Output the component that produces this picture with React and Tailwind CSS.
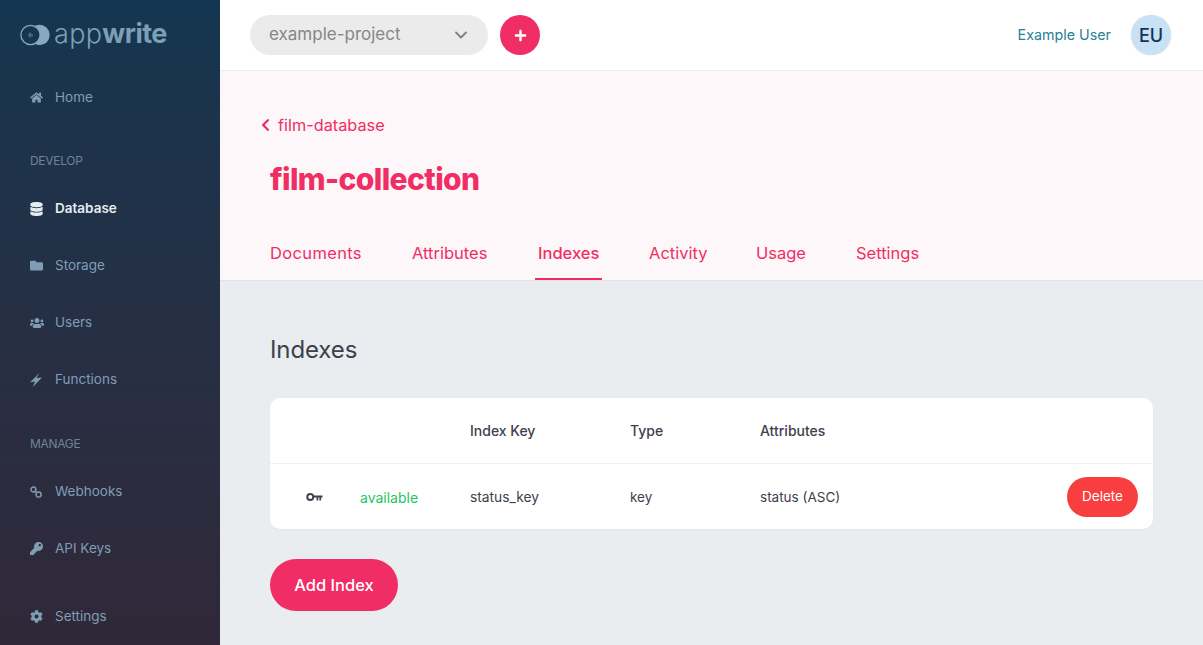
import React from "react";
import { FaHome, FaDatabase, FaFolder, FaUsers, FaKey, FaCog, FaChevronLeft, FaPlus } from "react-icons/fa";
import { ChevronDown } from "lucide-react";

const fontStack = { fontFamily: "Inter, 'Liberation Sans', sans-serif" };

const LinkIcon = ({ className }) => (
  <svg viewBox="0 0 14 14" className={className} fill="none" stroke="currentColor" strokeWidth="1.7">
    <circle cx="4" cy="4" r="2.9" />
    <circle cx="10" cy="10" r="3" />
    <path d="M6 6 8 8" />
  </svg>
);

const BoltIcon = ({ className }) => (
  <svg viewBox="0 0 12 14" className={className} fill="currentColor">
    <path d="M9.5 0 6.4 5 12 4.4 2.8 14 5 8.6 0 9.2Z" />
  </svg>
);

const TableKey = ({ className }) => (
  <svg viewBox="0 0 18 10" className={className} fill="none">
    <circle cx="4.5" cy="5" r="3.2" stroke="currentColor" strokeWidth="2" />
    <path d="M7.5 3.4H17.5V5.6H16V8.6H14.2V5.6H13V8.6H11.2V5.6H7.5Z" fill="currentColor" />
  </svg>
);

const Logo = () => (
  <div className="flex items-center gap-[4px] pl-[20px] h-[69px] text-[#7c9fb8]">
    <svg viewBox="0 0 30 22" className="w-[30px] h-[22px] mt-[1px]">
      <circle cx="19.5" cy="11" r="10.2" fill="#86a8c0" />
      <circle cx="10.5" cy="11" r="9.6" fill="#143650" stroke="#86a8c0" strokeWidth="1.3" />
      <path d="M8 11h1M10 8.5v5M12 10v2.5" stroke="#86a8c0" strokeWidth="0.8" />
    </svg>
    <span className="text-[27px] leading-none font-light mt-[-2px] tracking-[0.3px]">
      app<span className="font-bold tracking-[-0.5px]">write</span>
    </span>
  </div>
);

const NavItem = ({ icon: Icon, label, active, iconClass = "w-[12px] h-[12px]" }) => (
  <div className={`h-[57px] flex items-center pl-[30px] text-[13.5px] ${active ? "text-[#e6edf2] font-semibold" : "text-[#7f9db5]"}`}>
    <span className="w-[25px] flex items-center">
      <Icon className={iconClass} />
    </span>
    {label}
  </div>
);

const NavLabel = ({ children, className }) => (
  <div className={`pl-[30px] text-[12px] tracking-[-0.3px] text-[#6e8496] ${className}`}>{children}</div>
);

const Sidebar = () => (
  <aside className="w-[220px] shrink-0 h-full flex flex-col bg-gradient-to-b from-[#143650] to-[#302839]">
    <Logo />
    <NavItem icon={FaHome} label="Home" iconClass="w-[13px] h-[13px]" />
    <NavLabel className="h-[54px] pt-[26px] leading-[18px]">DEVELOP</NavLabel>
    <NavItem icon={FaDatabase} label="Database" active iconClass="w-[13px] h-[14px]" />
    <NavItem icon={FaFolder} label="Storage" iconClass="w-[13px] h-[13px]" />
    <NavItem icon={FaUsers} label="Users" iconClass="w-[14px] h-[16px]" />
    <NavItem icon={BoltIcon} label="Functions" iconClass="w-[12px] h-[14px]" />
    <NavLabel className="h-[55px] pt-[27px] leading-[18px]">MANAGE</NavLabel>
    <NavItem icon={LinkIcon} label="Webhooks" />
    <NavItem icon={FaKey} label="API Keys" iconClass="w-[13px] h-[13px]" />
    <div className="mt-auto">
      <NavItem icon={FaCog} label="Settings" iconClass="w-[13px] h-[13px]" />
    </div>
  </aside>
);

const TopBar = () => (
  <header className="h-[71px] shrink-0 bg-white border-b border-[#eeeeee] flex items-center pl-[30px] pr-[32px]">
    <div className="w-[238px] h-[40px] rounded-full bg-[#ebebeb] flex items-center justify-between pl-[19px] pr-[17px] text-[#868686] text-[17px]">
      example-project
      <ChevronDown className="w-[20px] h-[20px] text-[#808080]" strokeWidth={2.2} />
    </div>
    <div className="ml-[12px] w-[40px] h-[40px] rounded-full bg-[#f02e65] flex items-center justify-center text-white">
      <FaPlus className="w-[13px] h-[13px]" />
    </div>
    <div className="ml-auto text-[14.3px] text-[#2a8198]">Example User</div>
    <div className="ml-[20px] w-[40px] h-[40px] rounded-full bg-[#c8e1f3] flex items-center justify-center text-[#12345c] text-[18px] font-medium shadow-[0_0_2px_rgba(0,0,0,0.1)]">
      EU
    </div>
  </header>
);

const tabs = [
  { label: "Documents", cls: "w-[142px] tracking-[0.35px]" },
  { label: "Attributes", cls: "w-[126px]" },
  { label: "Indexes", cls: "w-[111px]", active: true },
  { label: "Activity", cls: "w-[107px]" },
  { label: "Usage", cls: "w-[100px]" },
  { label: "Settings", cls: "w-[80px]" },
];

const ProjectHead = () => (
  <section className="h-[210px] shrink-0 bg-[#fdf7f9] border-b border-[#e4e2e4] pl-[40px] flex flex-col">
    <div className="mt-[44px] flex items-center gap-[7px] text-[16.3px] leading-[20px] text-[#f02e65]">
      <FaChevronLeft className="w-[11px] h-[14px]" />
      film-database
    </div>
    <h1 className="mt-[24px] pl-[10px] text-[30px] leading-[40px] font-extrabold text-[#f02e65] tracking-[-0.6px]">film-collection</h1>
    <nav className="mt-auto pl-[10px] flex h-[55px] text-[16.5px] text-[#f02e65]">
      {tabs.map((tab) => (
        <div key={tab.label} className={`${tab.cls} relative pt-[16px] leading-[24px] ${tab.active ? "font-medium" : ""}`}>
          {tab.label}
          {tab.active && <span className="absolute left-[-3px] bottom-0 w-[67px] h-[2px] bg-[#f02e65]" />}
        </div>
      ))}
    </nav>
  </section>
);

const IndexTable = () => (
  <div className="mt-[28px] w-[883px] h-[131px] rounded-[10px] bg-white shadow-[0_1px_2px_rgba(0,0,0,0.03)] text-[#40404c]">
    <div className="h-[66px] border-b border-[#eef0f2] flex items-center text-[14px] font-medium">
      <div className="w-[200px]" />
      <div className="w-[160px]">Index Key</div>
      <div className="w-[130px]">Type</div>
      <div>Attributes</div>
    </div>
    <div className="h-[65px] flex items-center text-[13.5px]">
      <div className="w-[90px] pl-[36px]">
        <TableKey className="w-[17px] h-[10px]" />
      </div>
      <div className="w-[110px] pt-[2px] text-[#1fc561] text-[14px]">available</div>
      <div className="w-[160px] pt-[2px] text-[13.8px]">status_key</div>
      <div className="w-[130px] pt-[2px]">key</div>
      <div className="pt-[2px]">status (ASC)</div>
      <div className="ml-auto mr-[15px] w-[71px] h-[40px] rounded-full bg-[#f83e3e] text-white flex items-center justify-center text-[13.5px]">
        Delete
      </div>
    </div>
  </div>
);

export default function App() {
  return (
    <div className="w-[1203px] h-[645px] overflow-hidden flex bg-[#e9edf0]" style={fontStack}>
      <Sidebar />
      <main className="flex-1 flex flex-col min-w-0">
        <TopBar />
        <ProjectHead />
        <section className="pl-[50px] pt-[49px]">
          <h2 className="text-[24px] leading-[40px] text-[#40404c] tracking-[-0.1px]">Indexes</h2>
          <IndexTable />
          <div className="mt-[30px] w-[128px] h-[52px] rounded-full bg-[#f02e65] text-white text-[16.5px] font-medium flex items-center justify-center">
            Add Index
          </div>
        </section>
      </main>
    </div>
  );
}
